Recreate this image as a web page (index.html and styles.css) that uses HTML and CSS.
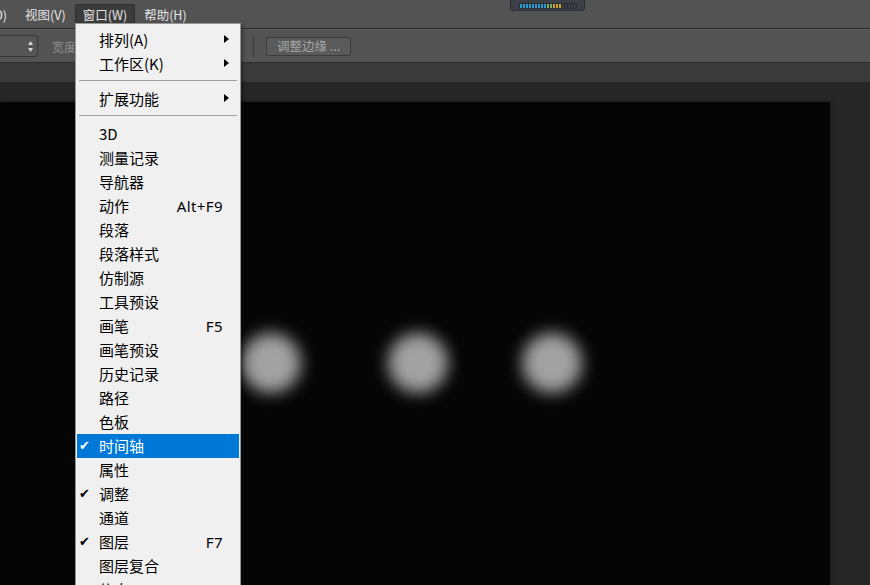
FILE: index.html
```html
<!DOCTYPE html>
<html lang="zh-CN">
<head>
  <meta charset="UTF-8" />
  <title>窗口菜单</title>
  <link rel="stylesheet" href="styles.css">
</head>
<body>
  <div class="app">
    <div class="menubar">
      <span class="menu-item cut">(D)</span>
      <span class="menu-item">视图(V)</span>
      <span class="menu-item open">窗口(W)</span>
      <span class="menu-item">帮助(H)</span>
      <div class="meter">
        <div class="meter-bar">
          <i class="b"></i><i class="b"></i><i class="b"></i><i class="b"></i><i class="b"></i><i class="b"></i><i class="b"></i><i class="b"></i><i class="b"></i><i class="g"></i><i class="g"></i><i class="y"></i><i class="y"></i><i class="y"></i><i class="d"></i><i class="d"></i><i class="d"></i><i class="d"></i><i class="d"></i>
        </div>
      </div>
    </div>

    <div class="options">
      <div class="select"><span class="spin">&#9650;<br>&#9660;</span></div>
      <span class="label">宽度</span>
      <span class="spacer"></span>
      <span class="sep"></span>
      <button class="btn">调整边缘 ...</button>
    </div>

    <div class="tabbar"></div>

    <div class="workspace">
      <div class="canvas">
        <div class="dot" style="left:241px"></div>
        <div class="dot" style="left:388px"></div>
        <div class="dot" style="left:522px"></div>
      </div>
    </div>

    <!-- 窗口 下拉菜单 -->
    <div class="dropdown">
      <div class="item sub">排列(A)</div>
      <div class="item sub">工作区(K)</div>
      <div class="divider"></div>
      <div class="item sub">扩展功能</div>
      <div class="divider"></div>
      <div class="item">3D</div>
      <div class="item">测量记录</div>
      <div class="item">导航器</div>
      <div class="item">动作<span class="key">Alt+F9</span></div>
      <div class="item">段落</div>
      <div class="item">段落样式</div>
      <div class="item">仿制源</div>
      <div class="item">工具预设</div>
      <div class="item">画笔<span class="key">F5</span></div>
      <div class="item">画笔预设</div>
      <div class="item">历史记录</div>
      <div class="item">路径</div>
      <div class="item">色板</div>
      <div class="item checked active">时间轴</div>
      <div class="item">属性</div>
      <div class="item checked">调整</div>
      <div class="item">通道</div>
      <div class="item checked">图层<span class="key">F7</span></div>
      <div class="item">图层复合</div>
      <div class="item">信息</div>
    </div>
  </div>
</body>
</html>
```

FILE: styles.css
```css
body {
  margin: 0;
  padding: 0;
  background: #282828;
  font-family: "Noto Sans CJK SC", "Noto Sans", sans-serif;
  overflow: hidden;
}

.app {
  position: relative;
  width: 870px;
  height: 585px;
  overflow: hidden;
}

/* 菜单栏 */
.menubar {
  position: relative;
  height: 28px;
  background: #535353;
  border-bottom: 1px solid #2a2a2a;
  display: flex;
  align-items: flex-start;
  font-size: 12.5px;
  color: #e4e4e4;
}

.menu-item {
  height: 19px;
  line-height: 19px;
  margin-top: 4px;
  padding: 0 6px;
  margin-right: 1px;
  border: 1px solid transparent;
  border-bottom: none;
}

.menu-item.cut {
  margin-left: -17px;
  margin-right: 4px;
}

.menu-item.open {
  background: #3c3c3c;
  border-color: #2e2e2e;
  border-radius: 2px 2px 0 0;
  padding: 0 7px;
  margin-left: 1px;
  margin-right: 2px;
}

.meter {
  position: absolute;
  left: 510px;
  top: -2px;
  width: 73px;
  height: 11px;
  background: #3b4047;
  border: 1px solid #2a2e33;
  border-radius: 3px;
  display: flex;
  align-items: center;
  justify-content: center;
}

.meter-bar {
  display: flex;
  gap: 1px;
  margin-top: 2px;
  padding: 1px;
  background: #2b2f35;
}

.meter-bar i {
  width: 2px;
  height: 4px;
}

.meter-bar .b { background: #2c9ad2; }
.meter-bar .g { background: #7fae5c; }
.meter-bar .y { background: #c9a52a; }
.meter-bar .d { background: #3a3f46; }

/* 选项栏 */
.options {
  height: 32px;
  background: #535353;
  border-top: 1px solid #5d5d5d;
  border-bottom: 1px solid #2b2b2b;
  display: flex;
  align-items: center;
  font-size: 12px;
}

.select {
  width: 40px;
  height: 20px;
  margin-left: -4px;
  background: #555555;
  border: 1px solid #383838;
  border-radius: 3px;
  display: flex;
  align-items: center;
  justify-content: flex-end;
}

.spin {
  font-size: 5px;
  line-height: 6px;
  color: #d8d8d8;
  text-align: center;
  margin-right: 4px;
}

.label {
  margin-left: 14px;
  color: #8e8e8e;
}

.spacer {
  width: 177px;
}

.sep {
  width: 1px;
  height: 22px;
  background: #3a3a3a;
  margin-right: 12px;
}

.btn {
  height: 19px;
  width: 85px;
  padding: 0;
  background: #5a5a5a;
  border: 1px solid #3b3b3b;
  border-radius: 2px;
  color: #a6a6a6;
  font-family: "Noto Sans CJK SC", sans-serif;
  font-size: 12.5px;
  line-height: 16px;
}

.tabbar {
  height: 19px;
  background: #3a3a3a;
}

/* 工作区 */
.workspace {
  background: #262626;
  padding-top: 20px;
  height: 500px;
  display: flex;
}

.canvas {
  position: relative;
  width: 830px;
  background: #050505;
  box-shadow: 1px 0 4px rgba(0, 0, 0, 0.35);
}

.dot {
  position: absolute;
  top: 231px;
  width: 60px;
  height: 60px;
  border-radius: 50%;
  background: #a2a2a2;
  filter: blur(8px);
}

/* 下拉菜单 */
.dropdown {
  position: absolute;
  left: 75px;
  top: 23px;
  width: 162px;
  padding: 4px 1px;
  background: #f0f0f0;
  border: 1px solid #979797;
  box-shadow: 2px 2px 3px rgba(0, 0, 0, 0.35);
  font-size: 15px;
  color: #000;
}

.item {
  position: relative;
  height: 24px;
  line-height: 24px;
  padding-left: 22px;
  padding-right: 16px;
  display: flex;
  justify-content: space-between;
}

.item.active {
  background: #0078d7;
  color: #fff;
}

.item.checked::before {
  content: "\2714";
  position: absolute;
  left: 2px;
  top: 0;
  font-family: "DejaVu Sans", sans-serif;
  font-size: 13px;
}

.item.sub::after {
  content: "";
  position: absolute;
  right: 10px;
  top: 7px;
  border-left: 5px solid #000;
  border-top: 4px solid transparent;
  border-bottom: 4px solid transparent;
}

.key {
  font-family: "Noto Sans", sans-serif;
  font-size: 15px;
  letter-spacing: 0.4px;
}

.divider {
  height: 1px;
  margin: 4px 2px 6px 2px;
  background: #a0a0a0;
}
```
